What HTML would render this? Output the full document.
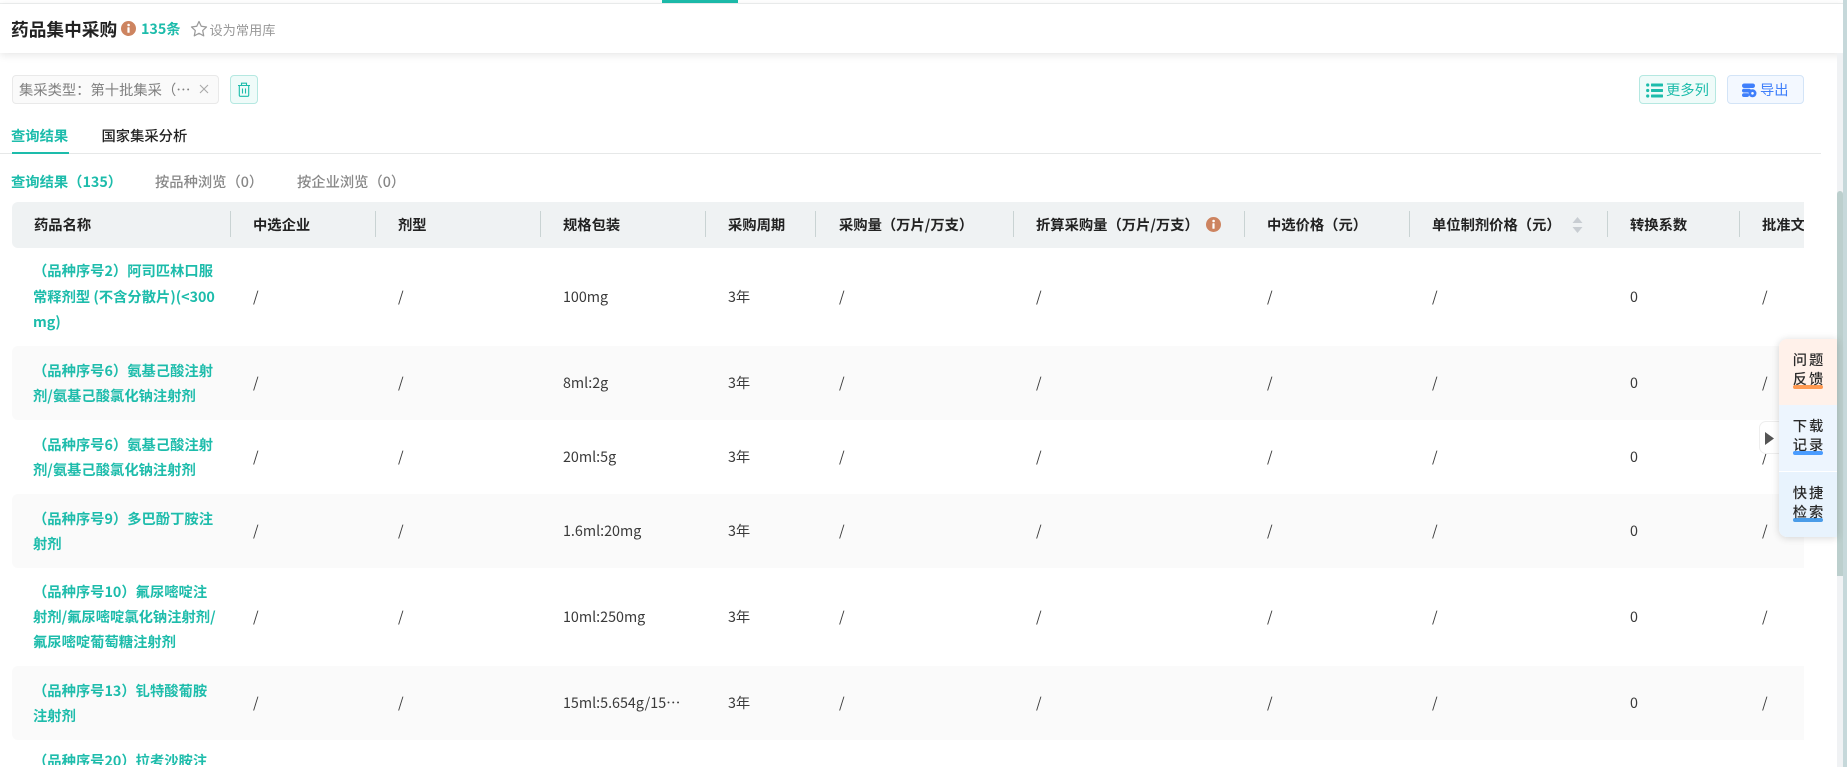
<!DOCTYPE html>
<html lang="zh">
<head>
<meta charset="utf-8">
<title>药品集中采购</title>
<style>
*{box-sizing:border-box}
html,body{margin:0;padding:0;width:1847px;height:767px;overflow:hidden;background:#fff;font-family:"Noto Sans CJK SC","Liberation Sans",sans-serif;color:#333}
.a{position:absolute;white-space:nowrap}
.hdr{position:absolute;left:0;top:4px;width:1843px;height:49px;background:#fff;box-shadow:0 2px 8px rgba(0,0,0,.10)}
table{border-collapse:collapse;table-layout:fixed;width:1880px;font-size:14.3px}
th{height:46px;background:#eff2f3;text-align:left;font-weight:700;color:#222;padding:0 0 1px 22px;position:relative;white-space:nowrap}
th:first-child{border-radius:6px 0 0 6px}
th .s{position:absolute;right:0;top:9px;height:26px;width:1px;background:#c9d3d3}
td{padding:0 0 1px 22px;color:#3a3a3a;vertical-align:middle;white-space:nowrap;overflow:hidden}
tr.o td{background:#fafafa}
tr.o td:first-child{border-radius:6px 0 0 6px}
td.n{color:#1dbcab;font-weight:700;line-height:25px;padding-left:21px}
.l{height:25px;overflow:hidden;padding-top:8px}
.side{position:absolute;left:1779px;top:339px;width:58px;height:198px;border-radius:8px 0 0 8px;box-shadow:0 1px 8px rgba(0,0,0,.16);overflow:hidden;background:#fff}
.side div{position:absolute;left:0;width:58px;height:66px;text-align:center;font-size:14.3px;font-weight:500;line-height:19px;color:#2a2a2a;letter-spacing:2px;padding-top:11px;padding-left:2px}
.side i{position:absolute;left:14px;width:30px;height:4px;border-radius:2px;top:46px}
.side span{position:relative}
</style>
</head>
<body>
<div class="a" style="left:0;top:3px;width:1843px;height:1px;background:#eef0f0"></div>
<div class="a" style="left:662px;top:0;width:76px;height:3px;background:#1dbcab"></div>
<div class="hdr"></div>
<div class="a" style="left:1837px;top:53px;width:6px;height:714px;background:#f0f2f4"></div>
<div class="a" style="left:1837px;top:191px;width:6px;height:385px;background:#bccfcd;border-radius:3px 3px 0 0"></div>
<div class="a" style="left:1843px;top:0;width:4px;height:767px;background:#c6d8da"></div>

<div class="a" style="left:11px;top:16px;font-size:17.7px;font-weight:700;color:#222;line-height:26px">药品集中采购</div>
<svg class="a" style="left:121px;top:21px" width="15" height="15" viewBox="0 0 15 15"><circle cx="7.5" cy="7.5" r="7.5" fill="#cd8460"/><rect x="6.4" y="6.2" width="2.2" height="5.6" rx=".6" fill="#fff"/><circle cx="7.6" cy="4" r="1.3" fill="#fff"/></svg>
<div class="a" style="left:141px;top:18px;font-size:14.3px;font-weight:700;color:#1dbcab;line-height:22px">135条</div>
<svg class="a" style="left:190px;top:20px" width="18" height="18" viewBox="0 0 16 16"><path d="M8 1.300l2 4.300 4.700.6-3.400 3.200.9 4.700L8 11.800l-4.200 2.300.9-4.700L1.300 6.200 6 5.600z" fill="none" stroke="#9a9a9a" stroke-width="1.1" stroke-linejoin="round"/></svg>
<div class="a" style="left:209.500px;top:20px;font-size:13.200px;color:#999;line-height:19px">设为常用库</div>

<div class="a" style="left:12px;top:75px;width:207px;height:29px;background:#fafafa;border:1px solid #e9e9e9;border-radius:4px"></div>
<div class="a" style="left:19px;top:79px;font-size:14.300px;color:#808080;line-height:21px">集采类型：第十批集采（…</div>
<svg class="a" style="left:199px;top:84px" width="10" height="10" viewBox="0 0 10 10"><path d="M1 1l8 8M9 1l-8 8" stroke="#aaa" stroke-width="1.100"/></svg>
<div class="a" style="left:230px;top:75px;width:28px;height:29px;background:#effbf9;border:1px solid #b5e8e1;border-radius:4px"></div>
<svg class="a" style="left:237px;top:82px" width="14" height="15" viewBox="0 0 14 15"><path d="M1 3.500h12M4.500 3.500V1.200h5v2.300M2.300 3.500v9.800a1 1 0 0 0 1 1h7.400a1 1 0 0 0 1-1V3.500M5.500 6.500v5M8.500 6.500v5" fill="none" stroke="#1dbcab" stroke-width="1.100"/></svg>

<div class="a" style="left:1639px;top:75px;width:77px;height:29px;background:#effbf9;border:1px solid #b5e8e1;border-radius:4px"></div>
<svg class="a" style="left:1646px;top:83px" width="17" height="15" viewBox="0 0 17 15"><g fill="#1dbcab"><circle cx="1.700" cy="2" r="1.600"/><circle cx="1.700" cy="7.500" r="1.600"/><circle cx="1.700" cy="13" r="1.600"/><rect x="5" y=".5" width="12" height="3" rx=".6"/><rect x="5" y="6" width="12" height="3" rx=".6"/><rect x="5" y="11.500" width="12" height="3" rx=".6"/></g></svg>
<div class="a" style="left:1666px;top:78.500px;font-size:14.300px;color:#1dbcab;line-height:21px">更多列</div>
<div class="a" style="left:1727px;top:75px;width:77px;height:29px;background:#f3f8ff;border:1px solid #d3e4f7;border-radius:4px"></div>
<svg class="a" style="left:1742px;top:83px" width="15" height="15" viewBox="0 0 15 15"><g fill="#3f7ffb"><rect x="0" y="0.500" width="13" height="4.500" rx="2.250"/><rect x="0" y="5.700" width="9" height="3.800" rx="1.900"/><rect x="0" y="10.200" width="7" height="3.800" rx="1.900"/><circle cx="10.500" cy="10.300" r="4"/></g><circle cx="10.500" cy="10.300" r="1.300" fill="#fff"/></svg>
<div class="a" style="left:1760px;top:78.500px;font-size:14.300px;color:#3f7ffb;line-height:21px">导出</div>

<div class="a" style="left:11px;top:125px;font-size:14.300px;font-weight:700;color:#1dbcab;line-height:21px">查询结果</div>
<div class="a" style="left:101.500px;top:125px;font-size:14.300px;font-weight:500;color:#222;line-height:21px">国家集采分析</div>
<div class="a" style="left:0;top:153px;width:1821px;height:1px;background:#e6e8e8"></div>
<div class="a" style="left:12px;top:152px;width:57px;height:2px;background:#1dbcab"></div>

<div class="a" style="left:11px;top:171px;font-size:14.300px;font-weight:700;color:#1dbcab;line-height:21px">查询结果（135）</div>
<div class="a" style="left:155px;top:171px;font-size:14.300px;font-weight:500;color:#888;line-height:21px">按品种浏览（0）</div>
<div class="a" style="left:297px;top:171px;font-size:14.300px;font-weight:500;color:#888;line-height:21px">按企业浏览（0）</div>

<div class="a" style="left:12px;top:202px;width:1792px;height:565px;overflow:hidden">
<table>
<colgroup><col style="width:219px"><col style="width:145px"><col style="width:165px"><col style="width:165px"><col style="width:110px"><col style="width:198px"><col style="width:231px"><col style="width:165px"><col style="width:198px"><col style="width:132px"><col style="width:153px"></colgroup>
<tr><th>药品名称<span class="s"></span></th><th>中选企业<span class="s"></span></th><th>剂型<span class="s"></span></th><th>规格包装<span class="s"></span></th><th>采购周期<span class="s"></span></th><th style="padding-left:23px">采购量（万片/万支）<span class="s"></span></th><th>折算采购量（万片/万支）<svg style="position:absolute;left:192px;top:15px" width="15" height="15" viewBox="0 0 15 15"><circle cx="7.500" cy="7.500" r="7.500" fill="#cd8460"/><rect x="6.400" y="6.200" width="2.200" height="5.600" rx=".6" fill="#fff"/><circle cx="7.600" cy="4" r="1.300" fill="#fff"/></svg><span class="s"></span></th><th>中选价格（元）<span class="s"></span></th><th>单位制剂价格（元）<svg style="position:absolute;left:162px;top:15px" width="11" height="16" viewBox="0 0 11 16"><path d="M5.500 0l5 6H.5zM5.500 16l-5-6h10z" fill="#c8cdd2"/></svg><span class="s"></span></th><th>转换系数<span class="s"></span></th><th>批准文号</th></tr>
<tr style="height:98px"><td class="n" style="line-height:25.500px">（品种序号2）阿司匹林口服<br>常释剂型 (不含分散片)(&lt;300<br>mg)</td><td>/</td><td>/</td><td>100mg</td><td>3年</td><td style="padding-left:23px">/</td><td>/</td><td>/</td><td>/</td><td>0</td><td>/</td></tr>
<tr class="o" style="height:74px"><td class="n">（品种序号6）氨基己酸注射<br>剂/氨基己酸氯化钠注射剂</td><td>/</td><td>/</td><td>8ml:2g</td><td>3年</td><td style="padding-left:23px">/</td><td>/</td><td>/</td><td>/</td><td>0</td><td>/</td></tr>
<tr style="height:74px"><td class="n">（品种序号6）氨基己酸注射<br>剂/氨基己酸氯化钠注射剂</td><td>/</td><td>/</td><td>20ml:5g</td><td>3年</td><td style="padding-left:23px">/</td><td>/</td><td>/</td><td>/</td><td>0</td><td>/</td></tr>
<tr class="o" style="height:74px"><td class="n">（品种序号9）多巴酚丁胺注<br>射剂</td><td>/</td><td>/</td><td>1.6ml:20mg</td><td>3年</td><td style="padding-left:23px">/</td><td>/</td><td>/</td><td>/</td><td>0</td><td>/</td></tr>
<tr style="height:98px"><td class="n">（品种序号10）氟尿嘧啶注<br>射剂/氟尿嘧啶氯化钠注射剂/<br>氟尿嘧啶葡萄糖注射剂</td><td>/</td><td>/</td><td>10ml:250mg</td><td>3年</td><td style="padding-left:23px">/</td><td>/</td><td>/</td><td>/</td><td>0</td><td>/</td></tr>
<tr class="o" style="height:74px"><td class="n">（品种序号13）钆特酸葡胺<br>注射剂</td><td>/</td><td>/</td><td>15ml:5.654g/15…</td><td>3年</td><td style="padding-left:23px">/</td><td>/</td><td>/</td><td>/</td><td>0</td><td>/</td></tr>
<tr><td class="n" style="vertical-align:top;padding-bottom:0"><div class="l">（品种序号20）拉考沙胺注</div></td><td colspan="10"></td></tr>
</table>
</div>

<div class="a" style="left:1759px;top:421px;width:24px;height:33px;background:#fff;border:1px solid #eeeeee;border-radius:7px 0 0 7px"></div>
<svg class="a" style="left:1765px;top:432px" width="10" height="13" viewBox="0 0 10 13"><path d="M0 0l9 6.500L0 13z" fill="#555"/></svg>
<div class="side">
<div style="top:0;background:#fff1ea"><i style="background:#ff9a52"></i><span>问题<br>反馈</span></div>
<div style="top:66px;background:#edf5fe"><i style="background:#4a9cff"></i><span>下载<br>记录</span></div>
<div style="top:133px;height:65px;background:#e8f3fd"><i style="background:#4a9ce8"></i><span>快捷<br>检索</span></div>
</div>
</body>
</html>
